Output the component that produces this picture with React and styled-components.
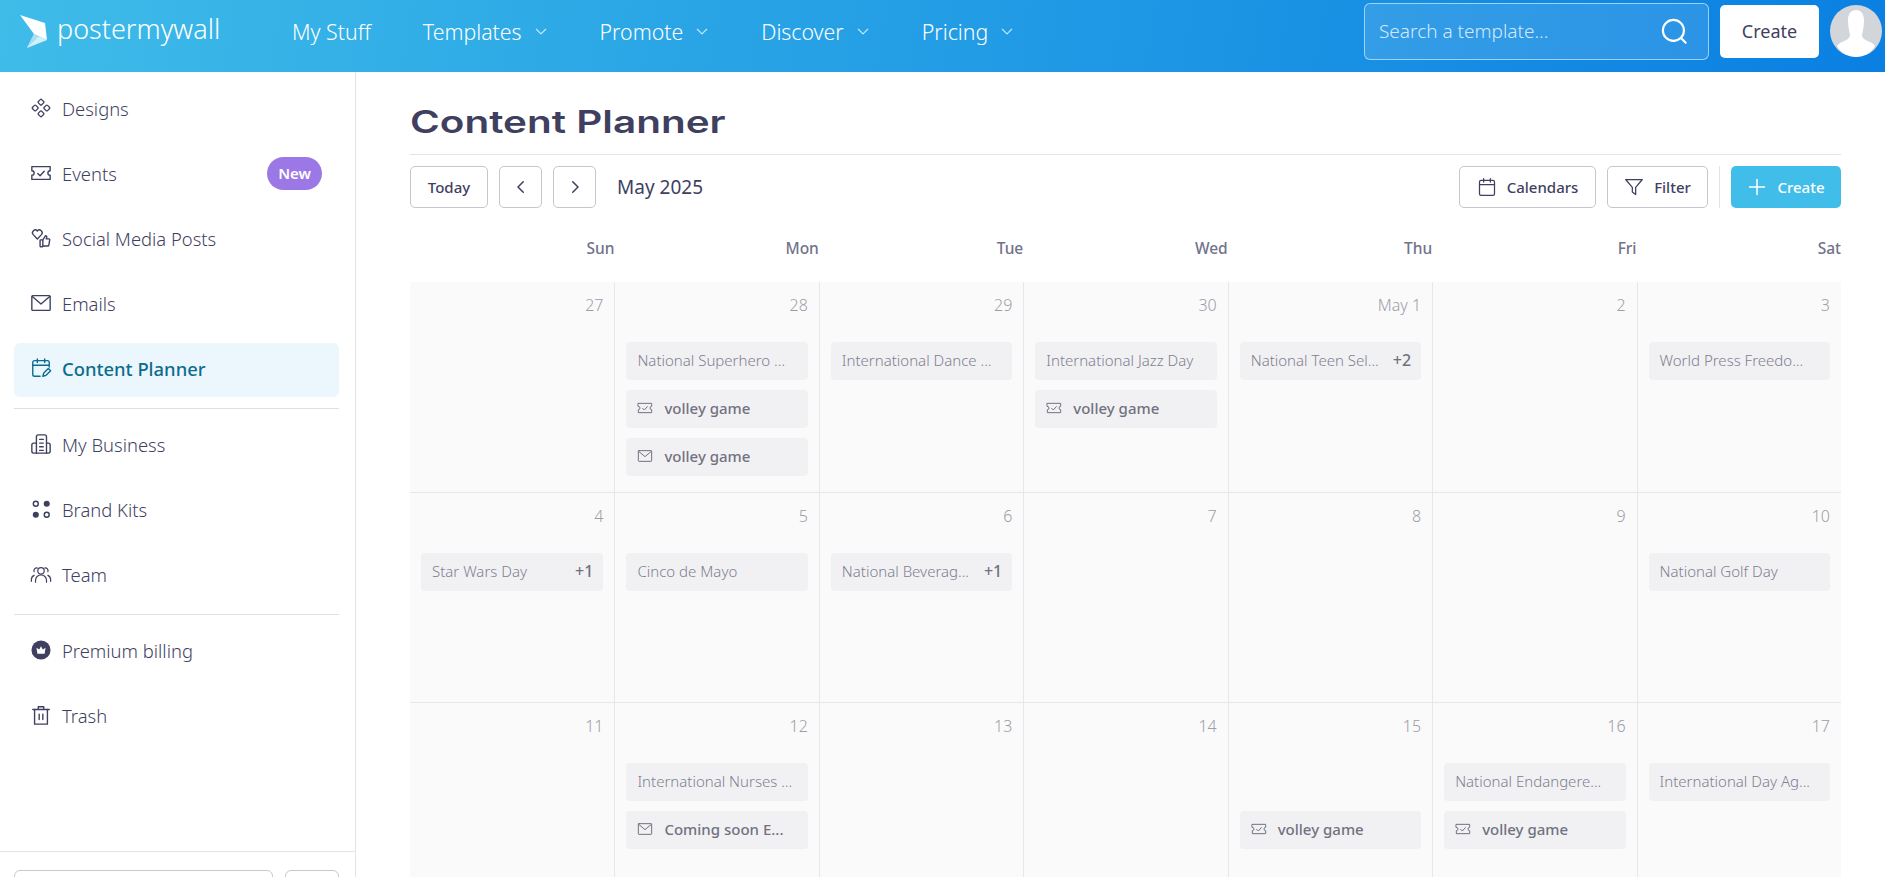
import styled, { createGlobalStyle } from "styled-components";

const INK = "#3f3f5f";

const GlobalStyle = createGlobalStyle`
  html, body {
    margin: 0;
    height: 100%;
    overflow: hidden;
    background: #fff;
    font-family: "Noto Sans", "Open Sans", sans-serif;
    color: ${INK};
  }
  * { box-sizing: border-box; }
`;

const Page = styled.div`
  height: 100vh;
  display: flex;
  flex-direction: column;
  overflow: hidden;
`;

/* top bar */
const TopBar = styled.header`
  flex: none;
  height: 72px;
  display: flex;
  align-items: center;
  padding: 0 3px 10px 20px;
  background: linear-gradient(100deg, #3fbce8 0%, #2aa6e6 35%, #0a80e2 100%);
  color: #fff;
`;
const Logo = styled.div`
  display: flex;
  align-items: center;
  gap: 10px;
  width: 272px;
`;
const LogoText = styled.span`
  font-size: 27px;
  font-weight: 300;
  line-height: 1;
  margin-top: -6px;
`;
const Nav = styled.nav`
  display: flex;
  align-items: center;
  gap: 52px;
  flex: 1;
`;
const NavItem = styled.a`
  display: flex;
  align-items: center;
  gap: 12px;
  font-size: 21.3px;
  font-weight: 300;
  color: #fff;
  svg { opacity: 0.75; }
`;
const Search = styled.div`
  width: 345px;
  height: 57px;
  display: flex;
  align-items: center;
  justify-content: space-between;
  padding: 0 20px 0 14px;
  border: 1px solid rgba(255, 255, 255, 0.55);
  border-radius: 6px;
  background: rgba(255, 255, 255, 0.12);
  font-size: 19px;
  font-weight: 300;
  color: rgba(255, 255, 255, 0.8);
`;
const CreateTop = styled.button`
  width: 99px;
  height: 53px;
  margin-left: 11px;
  border: 0;
  border-radius: 5px;
  background: #fff;
  font: 400 18px "Noto Sans", sans-serif;
  color: ${INK};
`;
const Avatar = styled.div`
  width: 52px;
  height: 52px;
  margin-left: 11px;
  border-radius: 50%;
  overflow: hidden;
  background: #d2d5d9;
`;

/* sidebar */
const Body = styled.div`
  flex: 1;
  min-height: 0;
  display: flex;
`;
const Sidebar = styled.aside`
  flex: none;
  width: 356px;
  display: flex;
  flex-direction: column;
  border-right: 1px solid #e3e3e6;
`;
const SideList = styled.div`
  flex: 1;
  display: flex;
  flex-direction: column;
  gap: 11px;
  padding: 11px 16px 0 14px;
`;
const SideItem = styled.a`
  height: 54px;
  flex: none;
  display: flex;
  align-items: center;
  gap: 10px;
  padding: 0 17px 4px 16px;
  border-radius: 6px;
  font-size: 18.4px;
  font-weight: ${(p) => (p.$active ? 500 : 300)};
  color: ${(p) => (p.$active ? "#0b6d8d" : INK)};
  background: ${(p) => (p.$active ? "#ebf6fd" : "transparent")};
`;
const IconSlot = styled.span`
  width: 22px;
  height: 22px;
  flex: none;
  display: flex;
  align-items: center;
  justify-content: center;
`;
const NewBadge = styled.span`
  margin-left: auto;
  padding: 0 11px;
  height: 33px;
  display: flex;
  align-items: center;
  border-radius: 17px;
  background: #9b78e6;
  color: #fff;
  font-size: 15px;
  font-weight: 600;
`;
const SideRule = styled.div`
  flex: none;
  height: 1px;
  margin-bottom: -1px;
  background: #e0e0e3;
`;
const SideFooter = styled.div`
  flex: none;
  height: 26px;
  display: flex;
  gap: 12px;
  padding: 18px 16px 0 14px;
  border-top: 1px solid #e3e3e6;
`;
const FooterButton = styled.div`
  height: 42px;
  flex: ${(p) => (p.$small ? "0 0 54px" : "1")};
  border: 1px solid #c8c8cf;
  border-radius: 6px;
`;

/* planner */
const Main = styled.main`
  flex: 1;
  min-width: 0;
  padding: 0 44px 0 54px;
  overflow: hidden;
`;
const TitleRow = styled.div`
  height: 83px;
  display: flex;
  align-items: flex-end;
  border-bottom: 1px solid #e4e4e7;
`;
const Title = styled.h1`
  margin: 0 0 14px;
  font: 600 31px Inter, sans-serif;
  line-height: 1.2;
  color: ${INK};
  transform: scaleX(1.305);
  transform-origin: left center;
`;
const Toolbar = styled.div`
  margin-top: 11px;
  height: 42px;
  display: flex;
  align-items: center;
  gap: 11px;
`;
const Btn = styled.button`
  height: 42px;
  width: ${(p) => p.$w}px;
  display: flex;
  align-items: center;
  justify-content: center;
  gap: 10px;
  padding: 0;
  border: 1px solid #c6c6cd;
  border-radius: 5px;
  background: #fff;
  font: 500 15px "Noto Sans", sans-serif;
  color: ${INK};
`;
const Month = styled.div`
  margin-left: 10px;
  font-size: 19px;
  font-weight: 400;
  flex: 1;
`;
const ToolRule = styled.div`
  width: 1px;
  height: 42px;
  background: #e4e4e7;
`;
const PrimaryBtn = styled(Btn)`
  border: 0;
  background: #41bdea;
  color: #fff;
`;
const Weekdays = styled.div`
  display: grid;
  grid-template-columns: repeat(7, 1fr);
  height: 74px;
  padding-top: 30px;
`;
const Weekday = styled.div`
  text-align: right;
  font-size: 15.5px;
  font-weight: 500;
  color: #72728a;
  line-height: 20px;
`;
const Grid = styled.div`
  display: grid;
  grid-template-columns: repeat(7, 1fr);
  grid-auto-rows: 210px;
  background: #fafafa;
`;
const Cell = styled.div`
  min-width: 0;
  padding: 13px 11px 0;
  border-left: ${(p) => (p.$first ? "0" : "1px solid #e6e6ec")};
  border-top: ${(p) => (p.$top ? "0" : "1px solid #e6e6ec")};
  display: flex;
  flex-direction: column;
`;
const DayNum = styled.div`
  height: 47px;
  text-align: right;
  font-size: 16px;
  font-weight: 300;
  line-height: 20px;
  color: #9d9da8;
`;
const Chips = styled.div`
  display: flex;
  flex-direction: column;
  gap: 10px;
`;
const Chip = styled.div`
  height: 38px;
  display: flex;
  align-items: center;
  gap: 11px;
  padding: 0 10px 2px 11px;
  border-radius: 4px;
  background: #f1f1f4;
  font-size: 15px;
  font-weight: 300;
  color: #7f7f90;
  white-space: nowrap;
  visibility: ${(p) => (p.$hidden ? "hidden" : "visible")};
`;
const PostChip = styled(Chip)`
  font-weight: 500;
  color: #72727f;
`;
const Extra = styled.span`
  margin-left: auto;
  font-size: 16px;
  font-weight: 500;
  color: #72727f;
`;

/* icons */
const Svg = ({ size = 22, vb = 24, sw = 1.5, children, ...rest }) => (
  <svg width={size} height={size} viewBox={`0 0 ${vb} ${vb}`} fill="none" stroke="currentColor" strokeWidth={sw} strokeLinecap="round" strokeLinejoin="round" {...rest}>
    {children}
  </svg>
);
const Ticket = (p) => (
  <Svg {...p}>
    <path d="M2 5h20v4.500a2.500 2.500 0 0 0 0 5V19H2v-4.500a2.500 2.500 0 0 0 0-5z" />
    <path d="M8.500 12.500l2.500 2.500 4.500-5" />
  </Svg>
);
const Mail = (p) => (
  <Svg {...p}>
    <rect x="2" y="4" width="20" height="16" rx="1" />
    <path d="M2.500 5l9.500 8 9.500-8" />
  </Svg>
);
const Chev = ({ dir = "down", size = 14 }) => {
  const d = { down: "M4 9l8 8 8-8", left: "M15 5l-7 7 7 7", right: "M9 5l7 7-7 7" }[dir];
  return <Svg size={size} sw={2}><path d={d} /></Svg>;
};
const DesignsIcon = () => (
  <Svg size={20} sw={1.5}>
    <rect x="9.200" y="2.200" width="5.600" height="5.600" rx="1.200" transform="rotate(45 12 5)" />
    <rect x="2.200" y="9.200" width="5.600" height="5.600" rx="1.200" transform="rotate(45 5 12)" />
    <rect x="16.200" y="9.200" width="5.600" height="5.600" rx="1.200" transform="rotate(45 19 12)" />
    <rect x="9.200" y="16.200" width="5.600" height="5.600" rx="1.200" transform="rotate(45 12 19)" />
  </Svg>
);
const SocialIcon = () => (
  <Svg sw={1.500}>
    <path d="M8 13L3.500 8.300a3 3 0 0 1 4.500-4 3 3 0 0 1 4.500 4L8 13z" />
    <rect x="11" y="14" width="3" height="7.500" rx=".5" />
    <path d="M14 14l3-4.500c1.200 0 1.500 1 1.200 2l-.5 1.500h3c.6 0 .9.500.8 1l-1 6c-.1.500-.4.700-.9.700H14" />
  </Svg>
);
const PlannerIcon = () => (
  <Svg>
    <path d="M11 21H5a2 2 0 0 1-2-2V6a2 2 0 0 1 2-2h14a2 2 0 0 1 2 2v5" />
    <path d="M3 9h18M8 2v4M16 2v4" />
    <path d="M14 21l1-3.500 5-5 2.500 2.500-5 5z" />
  </Svg>
);
const BusinessIcon = () => (
  <Svg>
    <path d="M7 22V4a2 2 0 0 1 2-2h7a2 2 0 0 1 2 2v18" />
    <path d="M7 11H4a2 2 0 0 0-2 2v7a2 2 0 0 0 2 2h16a2 2 0 0 0 2-2v-7a2 2 0 0 0-2-2h-2" />
    <path d="M10.500 7h4M10.500 11h4M10.500 15h4M10.500 19h4" />
  </Svg>
);
const BrandIcon = () => (
  <svg width="19" height="19" viewBox="0 0 20 20">
    <circle cx="4" cy="4" r="2.600" fill="none" stroke="currentColor" strokeWidth="1.500" />
    <circle cx="15.500" cy="4" r="3.200" fill="currentColor" />
    <circle cx="4" cy="15.500" r="3.200" fill="currentColor" />
    <circle cx="15.500" cy="15.500" r="2.600" fill="none" stroke="currentColor" strokeWidth="1.500" />
  </svg>
);
const TeamIcon = () => (
  <Svg sw={1.300}>
    <circle cx="12" cy="8.500" r="3.500" />
    <path d="M6 21v-2a6 6 0 0 1 12 0v2" />
    <path d="M8 5.500a3 3 0 0 0-3.500 4M16 5.500a3 3 0 0 1 3.500 4M1.500 20v-2a5 5 0 0 1 3-4.500M22.500 20v-2a5 5 0 0 0-3-4.500" />
  </Svg>
);
const CrownIcon = () => (
  <svg width="20" height="20" viewBox="0 0 22 22">
    <circle cx="11" cy="11" r="10.500" fill="currentColor" />
    <path d="M6 8.500l3 2 2-3.500 2 3.500 3-2-1 6.500H7z" fill="#fff" />
  </svg>
);
const TrashIcon = () => (
  <Svg>
    <path d="M3 6h18M9 6V3h6v3" />
    <path d="M5 6v16h14V6" />
    <path d="M10 11v6M14 11v6" />
  </Svg>
);
const CalendarIcon = () => (
  <Svg size={20}>
    <rect x="3" y="4" width="18" height="18" rx="2" />
    <path d="M3 9h18M8 2v4M16 2v4" />
  </Svg>
);
const FilterIcon = () => (
  <Svg size={20}>
    <path d="M2 3h20l-8 9.500V21l-4-3v-5.500z" />
  </Svg>
);
const PlusIcon = () => (
  <Svg size={20} sw={1.800}>
    <path d="M12 3v18M3 12h18" />
  </Svg>
);
const SearchIcon = () => (
  <Svg size={28} sw={1.800} style={{ color: "#fff" }}>
    <circle cx="11.500" cy="11.500" r="9" />
    <path d="M18 18l4 4" />
  </Svg>
);
const LogoMark = () => (
  <svg width="27" height="33" viewBox="0 0 27 33">
    <path d="M0 0l25 8 2 17-13-6z" fill="#fff" />
    <path d="M14 19l13 6-20 8z" fill="#d3f0fb" />
    <path d="M14 19l5 2.300-12 11.700z" fill="#a5e0f6" />
  </svg>
);

const Silhouette = () => (
  <svg width="52" height="52" viewBox="0 0 52 52">
    <path d="M26 5c5 0 8 4 8 10 0 6-1 11-2 15 0 3 3 5 8 7 2 1 4 2 5 4-4 7-11 11-19 11S11 48 7 41c1-2 3-3 5-4 5-2 8-4 8-7-1-4-2-9-2-15 0-6 3-10 8-10z" fill="#fff" />
  </svg>
);

const NAV = [
  { label: "My Stuff" },
  { label: "Templates", caret: true },
  { label: "Promote", caret: true },
  { label: "Discover", caret: true },
  { label: "Pricing", caret: true },
];

const WEEKDAYS = ["Sun", "Mon", "Tue", "Wed", "Thu", "Fri", "Sat"];

const ev = (text, extra) => ({ text, extra });
const post = (text, icon) => ({ text, icon });

const WEEKS = [
  [
    { n: "27" },
    { n: "28", items: [ev("National Superhero ..."), post("volley game", "ticket"), post("volley game", "mail")] },
    { n: "29", items: [ev("International Dance ...")] },
    { n: "30", items: [ev("International Jazz Day"), post("volley game", "ticket")] },
    { n: "May 1", items: [ev("National Teen Sel...", "+2")] },
    { n: "2" },
    { n: "3", items: [ev("World Press Freedo...")] },
  ],
  [
    { n: "4", items: [ev("Star Wars Day", "+1")] },
    { n: "5", items: [ev("Cinco de Mayo")] },
    { n: "6", items: [ev("National Beverag...", "+1")] },
    { n: "7" },
    { n: "8" },
    { n: "9" },
    { n: "10", items: [ev("National Golf Day")] },
  ],
  [
    { n: "11" },
    { n: "12", items: [ev("International Nurses ..."), post("Coming soon E...", "mail")] },
    { n: "13" },
    { n: "14" },
    { n: "15", items: [{ spacer: true }, post("volley game", "ticket")] },
    { n: "16", items: [ev("National Endangere..."), post("volley game", "ticket")] },
    { n: "17", items: [ev("International Day Ag...")] },
  ],
];

const renderChip = (item, i) => {
  if (item.spacer) return <Chip key={i} $hidden />;
  if (item.icon) {
    const Icon = item.icon === "mail" ? Mail : Ticket;
    return (
      <PostChip key={i}>
        <Icon size={16} />
        {item.text}
      </PostChip>
    );
  }
  return (
    <Chip key={i}>
      {item.text}
      {item.extra && <Extra>{item.extra}</Extra>}
    </Chip>
  );
};

export default function App() {
  return (
    <Page>
      <GlobalStyle />
      <TopBar>
        <Logo>
          <LogoMark />
          <LogoText>postermywall</LogoText>
        </Logo>
        <Nav>
          {NAV.map((n) => (
            <NavItem key={n.label}>
              {n.label}
              {n.caret && <Chev />}
            </NavItem>
          ))}
        </Nav>
        <Search>
          Search a template...
          <SearchIcon />
        </Search>
        <CreateTop>Create</CreateTop>
        <Avatar><Silhouette /></Avatar>
      </TopBar>
      <Body>
        <Sidebar>
          <SideList>
            <SideItem><IconSlot><DesignsIcon /></IconSlot>Designs</SideItem>
            <SideItem><IconSlot><Ticket /></IconSlot>Events<NewBadge>New</NewBadge></SideItem>
            <SideItem><IconSlot><SocialIcon /></IconSlot>Social Media Posts</SideItem>
            <SideItem><IconSlot><Mail /></IconSlot>Emails</SideItem>
            <SideItem $active><IconSlot><PlannerIcon /></IconSlot>Content Planner</SideItem>
            <SideRule />
            <SideItem><IconSlot><BusinessIcon /></IconSlot>My Business</SideItem>
            <SideItem><IconSlot><BrandIcon /></IconSlot>Brand Kits</SideItem>
            <SideItem><IconSlot><TeamIcon /></IconSlot>Team</SideItem>
            <SideRule />
            <SideItem><IconSlot><CrownIcon /></IconSlot>Premium billing</SideItem>
            <SideItem><IconSlot><TrashIcon /></IconSlot>Trash</SideItem>
          </SideList>
          <SideFooter>
            <FooterButton />
            <FooterButton $small />
          </SideFooter>
        </Sidebar>
        <Main>
          <TitleRow>
            <Title>Content Planner</Title>
          </TitleRow>
          <Toolbar>
            <Btn $w={78}>Today</Btn>
            <Btn $w={43}><Chev dir="left" size={18} /></Btn>
            <Btn $w={43}><Chev dir="right" size={18} /></Btn>
            <Month>May 2025</Month>
            <Btn $w={137}><CalendarIcon />Calendars</Btn>
            <Btn $w={101}><FilterIcon />Filter</Btn>
            <ToolRule />
            <PrimaryBtn $w={110}><PlusIcon />Create</PrimaryBtn>
          </Toolbar>
          <Weekdays>
            {WEEKDAYS.map((d) => <Weekday key={d}>{d}</Weekday>)}
          </Weekdays>
          <Grid>
            {WEEKS.map((week, w) =>
              week.map((day, d) => (
                <Cell key={`${w}-${d}`} $first={d === 0} $top={w === 0}>
                  <DayNum>{day.n}</DayNum>
                  <Chips>{(day.items || []).map(renderChip)}</Chips>
                </Cell>
              ))
            )}
          </Grid>
        </Main>
      </Body>
    </Page>
  );
}
